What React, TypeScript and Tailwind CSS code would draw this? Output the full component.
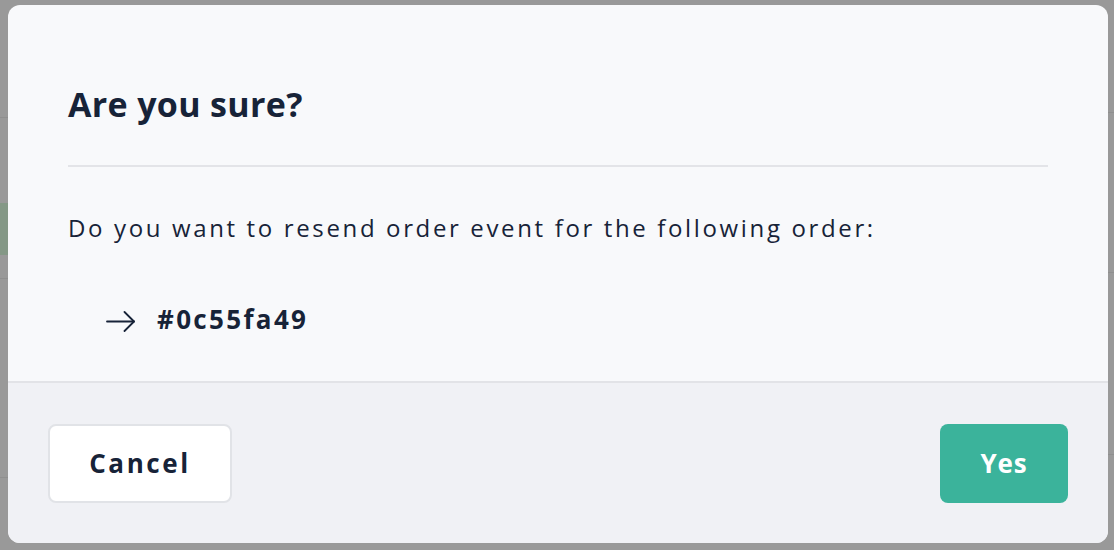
function Backdrop() {
  return (
    <div className="absolute inset-0 flex bg-[#999999]">
      <div className="w-[40px] flex flex-col">
        <div className="h-[118px] border-b border-[#8f8f8f]" />
        <div className="h-[85px]" />
        <div className="h-[52px] bg-[#849886]" />
        <div className="h-[24px] border-b border-[#8f8f8f]" />
        <div className="h-[199px] border-b border-[#8f8f8f]" />
      </div>
      <div className="flex-1" />
      <div className="w-[40px] flex flex-col">
        <div className="h-[113px] border-b border-[#8f8f8f]" />
        <div className="h-[160px] border-b border-[#8f8f8f]" />
        <div className="h-[182px] border-b border-[#8f8f8f]" />
      </div>
    </div>
  );
}

function Arrow() {
  return (
    <svg className="mt-[10px] shrink-0" width="30" height="21" viewBox="0 0 30 21" fill="none" stroke="currentColor" strokeWidth="1.8" strokeLinecap="round" strokeLinejoin="round">
      <path d="M1 10.5h27" />
      <path d="M18.5 1l9.5 9.5-9.5 9.5" />
    </svg>
  );
}

export default function App() {
  return (
    <div
      className="relative w-[1114px] h-[550px] overflow-hidden"
      style={{ fontFamily: "'Open Sans', Lato, sans-serif" }}
    >
      <Backdrop />
      <div className="absolute left-[8px] top-[5px] w-[1100px] h-[538px] rounded-[12px] overflow-hidden bg-[#f8f9fb] flex flex-col">
        <div className="flex-1 px-[60px] text-[#172338]">
          <h2 className="pt-[76px] pb-[38px] text-[34px] leading-[46px] font-bold tracking-[0.01em] border-b-2 border-[#e3e4e8]">
            Are you sure?
          </h2>
          <p className="mt-[45px] text-[24px] leading-[32px] tracking-[0.11em]">
            Do you want to resend order event for the following order:
          </p>
          <div className="mt-[57px] pl-[38px] flex items-start gap-[21px]">
            <Arrow />
            <span className="text-[26px] leading-[36px] font-bold tracking-[0.09em]">#0c55fa49</span>
          </div>
        </div>
        <div className="h-[162px] shrink-0 bg-[#f0f1f5] border-t-2 border-[#e2e3e7] px-[40px] flex items-center justify-between">
          <button className="w-[184px] h-[79px] rounded-[8px] bg-white border-2 border-[#e1e3e7] text-[26px] font-bold tracking-[0.1em] text-[#172338]">
            Cancel
          </button>
          <button className="w-[128px] h-[79px] rounded-[8px] bg-[#3bb39b] text-[26px] font-bold tracking-[0.03em] text-white">
            Yes
          </button>
        </div>
      </div>
    </div>
  );
}
